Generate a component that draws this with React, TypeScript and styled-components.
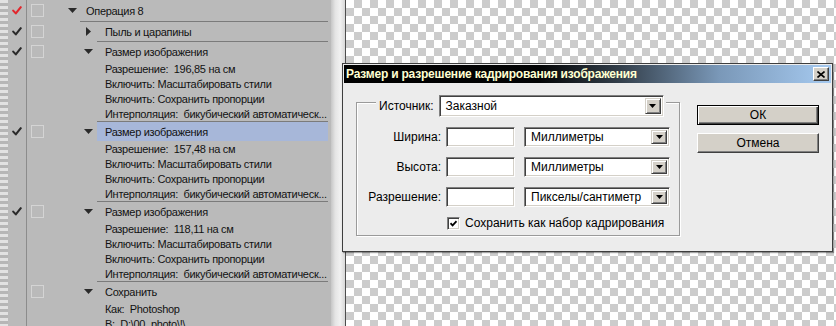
import React from "react";
import styled, { createGlobalStyle, css } from "styled-components";

const GlobalStyle = createGlobalStyle`
  html, body { margin: 0; padding: 0; }
  body { background: #bababa; font-family: "Liberation Sans", Arial, sans-serif; }
`;

const Screen = styled.div`
  position: relative;
  display: flex;
  width: 836px;
  height: 326px;
  overflow: hidden;
`;

/* ---------------- Actions panel ---------------- */

const Panel = styled.div`
  display: flex;
  flex: none;
  width: 331px;
  height: 100%;
  background: #bababa;
  color: #121212;
  font-size: 11px;
  letter-spacing: -0.3px;
`;

const StripeEdge = styled.div`
  flex: none;
  width: 8px;
  background: repeating-linear-gradient(to bottom, #e2e2e2 0 3px, #b6b6b6 3px 6px);
`;

const Tree = styled.div`
  flex: 1;
  min-width: 0;
  display: flex;
  flex-direction: column;
`;

const Row = styled.div<{ $h: number }>`
  display: flex;
  flex: none;
  height: ${(p) => p.$h}px;
`;

const CheckCell = styled.div`
  flex: none;
  width: 18px;
  border-right: 1px solid #8c8c8c;
  display: flex;
  align-items: center;
  justify-content: center;
`;

const BoxCell = styled.div`
  flex: none;
  width: 41px;
  box-sizing: border-box;
  padding-left: 4px;
  display: flex;
  align-items: center;
`;

const StepBox = styled.span`
  width: 13px;
  height: 13px;
  box-sizing: border-box;
  border: 1px solid #d4d4d4;
`;

const Body = styled.div<{ $indent: number }>`
  flex: 1;
  min-width: 0;
  display: flex;
  align-items: stretch;
  padding-left: ${(p) => p.$indent}px;
  margin-right: 3px;
`;

const Twisty = styled.span<{ $gap: number }>`
  flex: none;
  width: 9px;
  margin-right: ${(p) => p.$gap}px;
  display: flex;
  align-items: center;
  justify-content: center;
`;

const Label = styled.span<{ $pad: number; $hl?: boolean }>`
  flex: 1;
  min-width: 0;
  display: flex;
  align-items: center;
  padding-left: ${(p) => p.$pad}px;
  white-space: pre;
  overflow: hidden;
  background: ${(p) => (p.$hl ? "#a7b7d9" : "transparent")};
`;

const RuleLine = styled.span<{ $from: number }>`
  flex: 1;
  margin-left: ${(p) => p.$from}px;
  margin-right: 3px;
  background: #7b7b7b;
`;

const Gutter = styled.div`
  flex: none;
  width: 14px;
  background: linear-gradient(90deg, #c6c6c6 0%, #e4e4e4 30%, #f1f1f1 65%, #d8d8d8 100%);
`;

const Canvas = styled.div`
  flex: 1;
  border-left: 1px solid #4d4d4d;
  background: repeating-conic-gradient(#cccccc 0 25%, #ffffff 0 50%) 0 0 / 16px 16px;
`;

const Check = ({ red }: { red?: boolean }) => (
  <svg width="10" height="9" viewBox="0 0 10 9">
    <path
      d="M1.2 4.6 L3.8 7.4 L8.8 1.2"
      fill="none"
      stroke={red ? "#e2262c" : "#2a2a2a"}
      strokeWidth="2.1"
      strokeLinecap="round"
      strokeLinejoin="round"
    />
  </svg>
);

const Triangle = ({ open }: { open: boolean }) =>
  open ? (
    <svg width="9" height="5" viewBox="0 0 9 5">
      <polygon points="0,0 9,0 4.5,5" fill="#2a2a2a" />
    </svg>
  ) : (
    <svg width="5" height="9" viewBox="0 0 5 9">
      <polygon points="0,0 5,4.5 0,9" fill="#2a2a2a" />
    </svg>
  );

type HeaderProps = {
  text: string;
  level: 0 | 1;
  open: boolean;
  check?: "red" | "dark";
  hl?: boolean;
  h?: number;
};

const HeaderRow = ({ text, level, open, check, hl, h = 19 }: HeaderProps) => (
  <Row $h={h}>
    <CheckCell>{check && <Check red={check === "red"} />}</CheckCell>
    <BoxCell>
      <StepBox />
    </BoxCell>
    <Body $indent={level === 0 ? 0 : 16}>
      <Twisty $gap={level === 0 ? 3 : 4}>
        <Triangle open={open} />
      </Twisty>
      <Label $pad={level === 0 ? 6 : 8} $hl={hl}>
        {text}
      </Label>
    </Body>
  </Row>
);

const DetailRow = ({ text }: { text: string }) => (
  <Row $h={15}>
    <CheckCell />
    <BoxCell />
    <Body $indent={29}>
      <Label $pad={8}>{text}</Label>
    </Body>
  </Row>
);

const Separator = ({ level }: { level: 0 | 1 }) => (
  <Row $h={1}>
    <CheckCell />
    <BoxCell />
    <RuleLine $from={level === 0 ? 12 : 29} />
  </Row>
);

const resizeDetails = (res: string) => [
  `Разрешение:  ${res} на см`,
  "Включить: Масштабировать стили",
  "Включить: Сохранить пропорции",
  "Интерполяция:  бикубический автоматическ...",
];

/* ---------------- Dialog ---------------- */

const Dialog = styled.div`
  position: absolute;
  left: 342px;
  top: 63px;
  width: 491px;
  height: 189px;
  box-sizing: border-box;
  padding: 1px;
  background: #ececec;
  border: 1px solid #3e3e3e;
  box-shadow: 1px 1px 1px rgba(0, 0, 0, 0.35);
  display: flex;
  flex-direction: column;
`;

const TitleBar = styled.div`
  flex: none;
  height: 18px;
  padding: 0 2px;
  display: flex;
  align-items: center;
  justify-content: space-between;
  background: linear-gradient(90deg, #000 0%, #030405 40%, #34404c 57%, #7a98b8 77%, #a6caf0 100%);
`;

const TitleText = styled.span`
  color: #ffffd2;
  font-weight: bold;
  font-size: 12px;
  letter-spacing: -0.2px;
`;

const CloseButton = styled.span`
  width: 16px;
  height: 14px;
  box-sizing: border-box;
  background: #d4d0c8;
  border: 1px solid;
  border-color: #fff #404040 #404040 #fff;
  box-shadow: inset -1px -1px 0 #808080;
  display: flex;
  align-items: center;
  justify-content: center;
`;

const DialogBody = styled.div`
  display: flex;
  align-items: flex-start;
  padding: 19px 0 0 12px;
  font-size: 12px;
  color: #000;
`;

const GroupBox = styled.div`
  flex: none;
  width: 324px;
  height: 134px;
  box-sizing: border-box;
  border: 1px solid #9a9a9a;
  box-shadow: inset 1px 1px 0 #fff, 1px 1px 0 #fff;
  display: flex;
  flex-direction: column;
`;

const SourceRow = styled.div`
  align-self: flex-start;
  margin: -8px 0 0 19px;
  padding: 0 2px 0 3px;
  height: 22px;
  display: flex;
  align-items: center;
  gap: 5px;
  background: #ececec;
`;

const FieldRow = styled.div`
  display: flex;
  align-items: center;
  height: 20px;
  margin-top: 10px;
`;

const FieldLabel = styled.span`
  width: 84px;
  text-align: right;
`;

const sunken = css`
  box-sizing: border-box;
  background: #fff;
  border: 1px solid;
  border-color: #808080 #fff #fff #808080;
  box-shadow: inset 1px 1px 0 #404040, inset -1px -1px 0 #d4d0c8;
`;

const TextInput = styled.span`
  ${sunken};
  width: 69px;
  height: 20px;
  margin-left: 5px;
`;

const Select = styled.span<{ $w: number; $h: number; $ml?: number }>`
  ${sunken};
  width: ${(p) => p.$w}px;
  height: ${(p) => p.$h}px;
  margin-left: ${(p) => p.$ml ?? 0}px;
  padding: 2px 2px 2px 6px;
  display: flex;
  align-items: center;
`;

const SelectValue = styled.span`
  flex: 1;
  white-space: nowrap;
`;

const DropButton = styled.span`
  flex: none;
  width: 16px;
  align-self: stretch;
  box-sizing: border-box;
  background: #d4d0c8;
  border: 1px solid;
  border-color: #d4d0c8 #404040 #404040 #d4d0c8;
  box-shadow: inset 1px 1px 0 #fff, inset -1px -1px 0 #808080;
  display: flex;
  align-items: center;
  justify-content: center;
`;

const CheckRow = styled.label`
  display: flex;
  align-items: center;
  gap: 5px;
  margin-top: 9px;
  padding-left: 90px;
`;

const TickBox = styled.span`
  ${sunken};
  width: 13px;
  height: 13px;
  display: flex;
  align-items: center;
  justify-content: center;
`;

const ButtonColumn = styled.div`
  display: flex;
  flex-direction: column;
  gap: 8px;
  margin: 3px 0 0 17px;
`;

const PushButton = styled.button<{ $default?: boolean }>`
  width: 122px;
  height: 20px;
  padding: 0;
  box-sizing: border-box;
  font: 12px "Liberation Sans", Arial, sans-serif;
  color: #000;
  background: #d4d0c8;
  border: 1px solid;
  ${(p) =>
    p.$default
      ? css`
          border-color: #000;
          box-shadow: inset 1px 1px 0 #fff, inset -1px -1px 0 #404040, inset -2px -2px 0 #808080;
        `
      : css`
          border-color: #fff #404040 #404040 #fff;
          box-shadow: inset -1px -1px 0 #808080;
        `}
`;

const DownArrow = () => (
  <svg width="7" height="4" viewBox="0 0 7 4">
    <polygon points="0,0 7,0 3.5,4" fill="#000" />
  </svg>
);

const Dropdown = ({ value, w, h, ml }: { value: string; w: number; h: number; ml?: number }) => (
  <Select $w={w} $h={h} $ml={ml}>
    <SelectValue>{value}</SelectValue>
    <DropButton>
      <DownArrow />
    </DropButton>
  </Select>
);

const UnitField = ({ label, unit }: { label: string; unit: string }) => (
  <FieldRow>
    <FieldLabel>{label}</FieldLabel>
    <TextInput />
    <Dropdown value={unit} w={146} h={20} ml={9} />
  </FieldRow>
);

export default function App() {
  return (
    <>
      <GlobalStyle />
      <Screen>
        <Panel>
          <StripeEdge />
          <Tree>
            <HeaderRow text="Операция 8" level={0} open check="red" h={21} />
            <Separator level={0} />
            <HeaderRow text="Пыль и царапины" level={1} open={false} check="dark" />
            <Separator level={1} />
            <HeaderRow text="Размер изображения" level={1} open check="dark" />
            {resizeDetails("196,85").map((t) => (
              <DetailRow key={t} text={t} />
            ))}
            <Separator level={1} />
            <HeaderRow text="Размер изображения" level={1} open check="dark" hl />
            {resizeDetails("157,48").map((t) => (
              <DetailRow key={t} text={t} />
            ))}
            <Separator level={1} />
            <HeaderRow text="Размер изображения" level={1} open check="dark" />
            {resizeDetails("118,11").map((t) => (
              <DetailRow key={t} text={t} />
            ))}
            <Separator level={1} />
            <HeaderRow text="Сохранить" level={1} open />
            <DetailRow text="Как:  Photoshop" />
            <DetailRow text={"В:  D:\\00_photo\\!\\"} />
          </Tree>
        </Panel>
        <Gutter />
        <Canvas />

        <Dialog>
          <TitleBar>
            <TitleText>Размер и разрешение кадрирования изображения</TitleText>
            <CloseButton>
              <svg width="8" height="7" viewBox="0 0 8 7">
                <path d="M0.5 0.5 L7.5 6.5 M7.5 0.5 L0.5 6.5" stroke="#000" strokeWidth="1.6" />
              </svg>
            </CloseButton>
          </TitleBar>
          <DialogBody>
            <GroupBox>
              <SourceRow>
                <span>Источник:</span>
                <Dropdown value="Заказной" w={225} h={22} />
              </SourceRow>
              <UnitField label="Ширина:" unit="Миллиметры" />
              <UnitField label="Высота:" unit="Миллиметры" />
              <UnitField label="Разрешение:" unit="Пикселы/сантиметр" />
              <CheckRow>
                <TickBox>
                  <svg width="7" height="7" viewBox="0 0 7 7">
                    <path d="M0.5 3.2 L2.6 5.4 L6.5 1.2" fill="none" stroke="#000" strokeWidth="1.7" />
                  </svg>
                </TickBox>
                <span>Сохранить как набор кадрирования</span>
              </CheckRow>
            </GroupBox>
            <ButtonColumn>
              <PushButton $default>ОК</PushButton>
              <PushButton>Отмена</PushButton>
            </ButtonColumn>
          </DialogBody>
        </Dialog>
      </Screen>
    </>
  );
}
